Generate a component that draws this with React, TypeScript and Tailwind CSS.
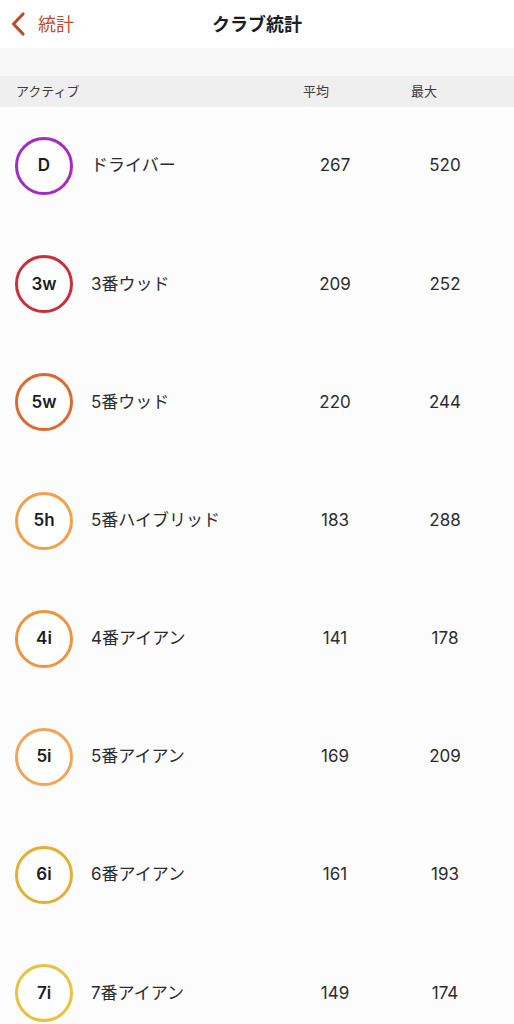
const clubs = [
  { code: 'D', name: 'ドライバー', avg: 267, max: 520, color: 'border-[#a52dbd]' },
  { code: '3w', name: '3番ウッド', avg: 209, max: 252, color: 'border-[#c8313a]' },
  { code: '5w', name: '5番ウッド', avg: 220, max: 244, color: 'border-[#db6a2f]' },
  { code: '5h', name: '5番ハイブリッド', avg: 183, max: 288, color: 'border-[#f2a04c]' },
  { code: '4i', name: '4番アイアン', avg: 141, max: 178, color: 'border-[#ef9440]' },
  { code: '5i', name: '5番アイアン', avg: 169, max: 209, color: 'border-[#f4a458]' },
  { code: '6i', name: '6番アイアン', avg: 161, max: 193, color: 'border-[#e3b032]' },
  { code: '7i', name: '7番アイアン', avg: 149, max: 174, color: 'border-[#e9c23e]' },
];

export default function App() {
  return (
    <div className="h-[1024px] overflow-hidden bg-[#fcfcfc] font-['Inter','Noto_Sans_CJK_JP',sans-serif] text-[#1c1c1e]">
      <header className="relative flex h-12 items-center bg-white">
        <button className="flex items-center gap-[11px] pl-[10px] text-[#c04b28]">
          <svg width="17" height="26" viewBox="0 0 17 26" fill="none">
            <path d="M13 3 L3.5 13 L13 23" stroke="currentColor" strokeWidth="3.2" strokeLinecap="round" strokeLinejoin="round" />
          </svg>
          <span className="text-[18px]">統計</span>
        </button>
        <h1 className="absolute left-1/2 -translate-x-1/2 text-[18px] font-bold">クラブ統計</h1>
      </header>
      <div className="h-7 bg-[#f8f8f8]" />
      <div className="flex h-[31px] items-center bg-[#efefef] text-[13px] text-[#3a3a3c]">
        <span className="flex-1 pl-4">アクティブ</span>
        <span className="w-[110px] pl-[2px]">平均</span>
        <span className="w-[103px]">最大</span>
      </div>
      <ul>
        {clubs.map(c => (
          <li key={c.code} className="flex h-[118.2px] items-center">
            <div className={`ml-[15px] flex h-[58px] w-[58px] items-center justify-center rounded-full border-[3px] bg-white ${c.color}`}>
              <span className="text-[17px] font-semibold">{c.code}</span>
            </div>
            <span className="ml-[18px] flex-1 text-[17px] text-[#2c2c2e]">{c.name}</span>
            <span className="w-[110px] pr-[42px] text-center text-[17px] text-[#2c2c2e]">{c.avg}</span>
            <span className="w-[103px] pr-[35px] text-center text-[17px] text-[#2c2c2e]">{c.max}</span>
          </li>
        ))}
      </ul>
    </div>
  );
}
